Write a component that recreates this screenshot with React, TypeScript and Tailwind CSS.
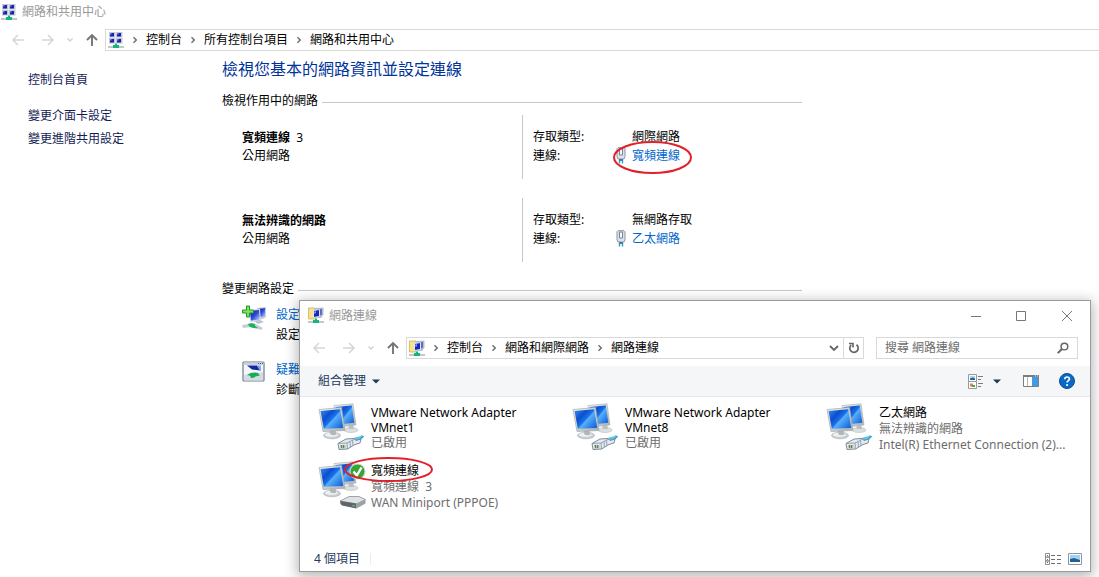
import type { ReactNode } from 'react';

function NetworkCenterIcon() {
  return (
    <svg width="16" height="17" viewBox="0 0 16 17" aria-hidden="true" className="shrink-0">
      {[
        [1, 0],
        [8, 0],
        [1, 6],
        [8, 6],
      ].map(([x, y]) => (
        <g key={`${x}-${y}`}>
          <rect x={x} y={y} width="6.500" height="5.500" fill="#c4c8d0" />
          <rect x={x + 1} y={y + 1} width="4" height="3.500" fill="#1a22b0" />
          <rect x={x + 1} y={y + 1} width="1.500" height="1.500" fill="#6f8cf0" />
        </g>
      ))}
      <path d="M0 14h16v2H0z" fill="#c3c7c9" />
      <path d="M7 11.500h2V13h2v3H5v-3h2z" fill="#12b877" />
    </svg>
  );
}

function ConnectionsIcon() {
  return (
    <svg width="16" height="17" viewBox="0 0 16 17" aria-hidden="true" className="shrink-0">
      <path d="M.5 1H7v11H.5z" fill="#f6e38e" stroke="#cdb04c" strokeWidth=".8" />
      <path d="M7 1 15.500 .5v7L13 11H7z" fill="#b4bccb" />
      <path d="M9.500 2h4.500v5.500l-3 1.500z" fill="#5a70bd" />
      <path d="M5.500 3.500 11.500 2.500v7l-6 1z" fill="#1626c4" stroke="#dfe5f2" strokeWidth="1" />
      <path d="M6.300 4.500 8 4.200v2l-1.700.6z" fill="#86a4ff" />
      <path d="M0 14h16v2H0z" fill="#c3c7c9" />
      <path d="M7 11.500h2V13h2v3H5v-3h2z" fill="#12b877" />
    </svg>
  );
}

function ArrowIcon({ dir, dark }: { dir: 'left' | 'right' | 'up'; dark?: boolean }) {
  const paths = {
    left: 'M13 7H2M7 2L2 7l5 5',
    right: 'M1 7h11M7 2l5 5-5 5',
    up: 'M7 13V2M2 7l5-5 5 5',
  };
  return (
    <svg width="14" height="14" viewBox="0 0 14 14" fill="none" aria-hidden="true">
      <path d={paths[dir]} stroke={dark ? '#757575' : '#d6d6d6'} strokeWidth={dark ? 1.9 : 1.5} />
    </svg>
  );
}

function SmallChevron() {
  return (
    <svg width="8" height="6" viewBox="0 0 8 6" fill="none" aria-hidden="true">
      <path d="M1.500 1.500 4 4l2.500-2.500" stroke="#cfcfcf" strokeWidth="1.300" />
    </svg>
  );
}

function CrumbChevron() {
  return (
    <svg width="6" height="8" viewBox="0 0 6 8" fill="none" aria-hidden="true" className="shrink-0">
      <path d="M1.500 1.200 4.300 4 1.500 6.800" stroke="#6b6b6b" strokeWidth="1.400" />
    </svg>
  );
}

function DownTriangle() {
  return (
    <svg width="8" height="5" viewBox="0 0 8 5" aria-hidden="true">
      <path d="M0 .5h8L4 4.500z" fill="#1e395b" />
    </svg>
  );
}

function PlugIcon() {
  return (
    <svg width="10" height="17" viewBox="0 0 10 17" aria-hidden="true" className="shrink-0">
      <path d="M2 .7h6l1 1v8L8 12H2L1 9.700v-8z" fill="#dbe2ec" stroke="#8b96a5" strokeWidth="1" />
      <path d="M3.500 2v6h3V2z" fill="#f7f9fc" stroke="#76839a" strokeWidth="1" />
      <path d="M3 12h4l-.5 2h-3z" fill="#54728f" />
      <path d="M3.500 13v3.500M6.500 13v3.500" stroke="#299ec0" strokeWidth="1.400" />
    </svg>
  );
}

function NewConnectionIcon() {
  return (
    <svg width="26" height="26" viewBox="0 0 26 26" aria-hidden="true" className="shrink-0">
      <defs>
        <linearGradient id="screen-a" x1="0" y1="0" x2="1" y2="1">
          <stop offset="0" stopColor="#0a1496" />
          <stop offset=".5" stopColor="#2c4bd8" />
          <stop offset="1" stopColor="#d3defa" />
        </linearGradient>
      </defs>
      <path d="M15 3l9-1v10l-3 2-6 1z" fill="#c6ccdb" />
      <path d="M16 4l7-1v8l-7 2z" fill="url(#screen-a)" />
      <path d="M7 5l11-1 1 12-11 1z" fill="#d9deea" />
      <path d="M8 6l9-1 1 9.500-9 1z" fill="url(#screen-a)" />
      <path d="M12 16l6-1 4 2-6 2z" fill="#bcc3cc" />
      <path d="M0 20l12-2 9 5-2 2-9-3-9 1z" fill="#c7ced2" />
      <path d="M6 19c4-2 8 0 7 2l3 2c-4 1-8-1-9-2z" fill="#18b35c" />
      <path
        d="M4.500 1h3v4h4v3h-4v4h-3V8h-4V5h4z"
        fill="#7fe05e"
        stroke="#1c982c"
        strokeWidth="1"
      />
    </svg>
  );
}

function TroubleshootIcon() {
  return (
    <svg width="24" height="22" viewBox="0 0 24 22" aria-hidden="true" className="mt-px shrink-0">
      <rect x="1" y="1" width="21" height="19" rx="1" fill="#f5f7fa" stroke="#717b89" strokeWidth="1.200" />
      <path d="M1.600 1.600h20V4h-20z" fill="#c9d1dd" />
      <path d="M16 2.500h1M18 2.500h1M20 2.500h1" stroke="#4e5b70" strokeWidth="1" />
      <path d="M5 4.500h10l4 5-9-1z" fill="#1428a5" />
      <path d="M15 4.500h4v5l-2-1z" fill="#8aa4ea" />
      <path d="M2 14l19-3v8.500H2z" fill="#d5dbe0" />
      <path d="M5 14c3-3 9-3 11-2l2 3c-4-1-5 2-9 2 0-2-2-3-4-3z" fill="#17ae5b" />
    </svg>
  );
}

function AdapterIcon({ kind }: { kind: 'cable' | 'modem' }) {
  return (
    <svg width="48" height="50" viewBox="0 0 48 50" aria-hidden="true" className="shrink-0">
      <defs>
        <linearGradient id="screen-b" x1="0" y1="0" x2="1" y2=".8">
          <stop offset="0" stopColor="#3b8ff0" />
          <stop offset=".35" stopColor="#0b4fce" />
          <stop offset=".55" stopColor="#1b72ea" />
          <stop offset=".6" stopColor="#57b0fb" />
          <stop offset="1" stopColor="#1a68dc" />
        </linearGradient>
        <linearGradient id="metal" x1="0" y1="0" x2="1" y2="1">
          <stop offset="0" stopColor="#f4f5f6" />
          <stop offset="1" stopColor="#a7aeb2" />
        </linearGradient>
      </defs>
      <ellipse cx="33" cy="29" rx="7" ry="2.500" fill="#dcdfe0" stroke="#b9bdbf" strokeWidth=".6" />
      <path d="M30 23h5l1 5h-5z" fill="#b9bfc2" />
      <path d="M16 4.500 35 2.800 38 24l-18 2z" fill="url(#metal)" stroke="#b0b6b9" strokeWidth=".7" />
      <path d="M17.500 6 33.800 4.500l2.500 17.300L20 23.500z" fill="url(#screen-b)" />
      <ellipse cx="14" cy="34.500" rx="8.500" ry="3.300" fill="#c9ced0" stroke="#a8aeb1" strokeWidth=".6" />
      <ellipse cx="13.500" cy="33.700" rx="6.500" ry="2.100" fill="#eff1f1" />
      <path d="M11 28h6l1.500 5.500q-3 1.500-6 0z" fill="#b1b8bb" />
      <path d="M1 8.500 23.500 6.500 27 29.500 5 30.500z" fill="url(#metal)" stroke="#a3aaae" strokeWidth=".7" />
      <path d="M2.500 10 22.200 8.200 25.200 27 5.800 27.800z" fill="url(#screen-b)" />
      {kind === 'cable' ? (
        <g>
          <path d="M35 39c3-2 7-1 10-4" stroke="#5cc4e8" strokeWidth="3" fill="none" />
          <path d="M37 39.500c4 0 7-2 8.500-4.500" stroke="#1e86b4" strokeWidth="1" fill="none" />
          <path
            d="M20 42.500 28 38l8-.5 2 2 5-1.500-1 4-5 1.500-7.500 4.500-8.500.5z"
            fill="#e4ebf0"
            stroke="#7b8b9c"
            strokeWidth="1"
          />
          <path d="M20 42.500l9-.5.500 6M29 42l8-4M32 40.500l.5 5.500M34.500 39.500l.5 5" fill="none" stroke="#8a99aa" strokeWidth=".9" />
          <path d="M22 44h5.500v3.500H22.500z" fill="#b5bd9c" />
          <path d="M23.500 44v3M25.500 44v3" stroke="#5c6858" strokeWidth=".8" />
        </g>
      ) : (
        <g>
          <circle cx="39.500" cy="12.500" r="7.500" fill="#35a535" stroke="#c7d8c7" strokeWidth="1.200" />
          <path d="M35.500 12.500l3.300 4 4.700-8" fill="none" stroke="#fff" strokeWidth="2.400" />
          <path d="M22 42l9-4.500h10l6.500 3-9 4.500z" fill="#dfe2e3" stroke="#8b9195" strokeWidth=".8" />
          <path d="M22 42l16.500 2.500v5l-14.500-3q-2-1.500-2-4.500z" fill="#5e6468" />
          <path d="M38.500 44.500l9-4v4l-9 5z" fill="#9ba2a5" />
          <path d="M34.500 46.500l2 .3" stroke="#6ce26c" strokeWidth="1.200" />
        </g>
      )}
    </svg>
  );
}

function NavButtons() {
  return (
    <div className="flex shrink-0 items-center">
      <button aria-label="上一頁" className="w-[30px]"><ArrowIcon dir="left" /></button>
      <button aria-label="下一頁" className="w-[25px]"><ArrowIcon dir="right" /></button>
      <button aria-label="最近的位置" className="w-[19px]"><SmallChevron /></button>
      <button aria-label="上移" className="w-5"><ArrowIcon dir="up" dark /></button>
    </div>
  );
}

function Breadcrumbs({ icon, items }: { icon: ReactNode; items: string[] }) {
  return (
    <nav className="flex min-w-0 grow items-center whitespace-nowrap pl-0.5">
      {icon}
      {items.map((item) => (
        <span key={item} className="flex items-center">
          <span className="flex w-[22px] justify-center"><CrumbChevron /></span>
          <a href="#" className="text-black">{item}</a>
        </span>
      ))}
    </nav>
  );
}

function SectionTitle({ children }: { children: ReactNode }) {
  return (
    <div className="flex items-center gap-1">
      <h2 className="leading-4">{children}</h2>
      <div className="mt-0.5 h-px grow bg-[#c8c8c8]" />
    </div>
  );
}

function Circled({ children, className }: { children: ReactNode; className: string }) {
  return (
    <span className="relative">
      {children}
      <svg
        className={`pointer-events-none absolute overflow-visible ${className}`}
        viewBox="0 0 100 40"
        preserveAspectRatio="none"
        aria-hidden="true"
      >
        <ellipse
          cx="50"
          cy="20"
          rx="50"
          ry="20"
          fill="none"
          stroke="#e2202a"
          strokeWidth="2"
          vectorEffect="non-scaling-stroke"
        />
      </svg>
    </span>
  );
}

function NetworkRow({ name, access, link }: { name: ReactNode; access: string; link: ReactNode }) {
  return (
    <section className="flex h-16 pl-5">
      <div className="w-[280px] pt-3.5 leading-[18px]">
        <h3 className="whitespace-pre font-bold">{name}</h3>
        <p>公用網路</p>
      </div>
      <dl className="grid grid-cols-[83px_1fr] content-start border-l border-[#c8c8c8] pl-2.5 pt-3 leading-[19px]">
        <dt>存取類型:</dt>
        <dd className="pl-4">{access}</dd>
        <dt>連線:</dt>
        <dd className="flex items-center gap-1.5">
          <PlugIcon />
          {link}
        </dd>
      </dl>
    </section>
  );
}

function SettingRow({ icon, title, text }: { icon: ReactNode; title: string; text: string }) {
  return (
    <section className="flex pl-5">
      <div className="w-[34px]">{icon}</div>
      <div className="leading-5">
        <a href="#" className="text-[#0066cc]">{title}</a>
        <p>{text}</p>
      </div>
    </section>
  );
}

function Adapter({ kind, name, lines, tight }: { kind: 'cable' | 'modem'; name: ReactNode; lines: string[]; tight?: boolean }) {
  return (
    <li className="flex w-[254px] gap-[5px]">
      <AdapterIcon kind={kind} />
      <div className={`w-[195px] pt-1 text-[#6d6d6d] ${tight ? 'leading-[15px]' : 'leading-4'}`}>
        <p className="w-[160px] text-black">{name}</p>
        {lines.map((line) => (
          <p key={line} className="whitespace-pre">{line}</p>
        ))}
      </div>
    </li>
  );
}

function ConnectionsWindow() {
  return (
    <div className="absolute left-[299px] right-2 top-[300px] border border-[#9b9b9b] bg-white shadow-[0_3px_12px_2px_rgba(0,0,0,0.28)]">
      <header className="flex h-[29px] items-center pl-2 text-[#999]">
        <ConnectionsIcon />
        <h2 className="grow pl-[5px]">網路連線</h2>
        <button aria-label="最小化" className="flex w-[45px] justify-center">
          <svg width="10" height="10" viewBox="0 0 10 10"><path d="M0 5.500h10" stroke="#777" /></svg>
        </button>
        <button aria-label="最大化" className="flex w-[45px] justify-center">
          <svg width="10" height="10" viewBox="0 0 10 10"><path d="M.5.5h9v9h-9z" stroke="#777" fill="none" /></svg>
        </button>
        <button aria-label="關閉" className="flex w-[47px] justify-center">
          <svg width="10" height="10" viewBox="0 0 10 10"><path d="M0 0l10 10M10 0L0 10" stroke="#777" /></svg>
        </button>
      </header>

      <div className="flex h-9 items-center pl-3 pr-3">
        <NavButtons />
        <div className="flex h-[22px] grow items-center border border-[#d9d9d9]">
          <Breadcrumbs icon={<ConnectionsIcon />} items={['控制台', '網路和網際網路', '網路連線']} />
          <button aria-label="先前的位置" className="flex w-[19px] justify-center">
            <svg width="10" height="7" viewBox="0 0 10 7" fill="none"><path d="M1 1l4 4 4-4" stroke="#666" strokeWidth="1.800" /></svg>
          </button>
          <button aria-label="重新整理" className="flex h-full w-5 items-center justify-center border-l border-[#d9d9d9]">
            <svg width="12" height="12" viewBox="0 0 12 12" fill="none">
              <path d="M3.200 3A4.200 4.200 0 1 0 8.500 2.800" stroke="#666" strokeWidth="1.700" />
              <path d="M1 1.500h4v4" stroke="#666" strokeWidth="1.600" />
            </svg>
          </button>
        </div>
        <label className="ml-3 flex h-[22px] w-[202px] items-center border border-[#d9d9d9] pl-2 pr-2">
          <input
            aria-label="搜尋"
            placeholder="搜尋 網路連線"
            className="min-w-0 grow outline-none placeholder:text-[#6d6d6d]"
          />
          <svg width="12" height="12" viewBox="0 0 12 12" fill="none" aria-hidden="true">
            <circle cx="7.500" cy="4.500" r="3.400" stroke="#666" strokeWidth="1.500" />
            <path d="M5 7 .8 11.200" stroke="#666" strokeWidth="2" />
          </svg>
        </label>
      </div>

      <div className="flex h-[31px] items-center border-b border-[#e6e8eb] bg-[#f4f6f8] pl-[18px] pr-[15px] text-[#1e395b]">
        <button className="flex items-center gap-1.5">組合管理 <DownTriangle /></button>
        <div className="grow" />
        <button aria-label="變更檢視" className="flex items-center gap-2.5">
          <svg width="15" height="15" viewBox="0 0 15 15">
            <path d="M.5.5h8v14h-8zM.5 7.500h8" fill="#fff" stroke="#9a9a9a" />
            <path d="M2 2h5v4H2z" fill="#a9d8f8" />
            <path d="M2 4.500l3-1 2 1V6H2z" fill="#2c5f8c" />
            <path d="M2 9.500h3v3H2z" fill="#e3844e" />
            <path d="M4 11h3v2H4z" fill="#45a83e" />
            <path d="M10 2.500h5M10 5.500h3M10 9.500h5M10 12.500h3" stroke="#7c7c7c" />
          </svg>
          <DownTriangle />
        </button>
        <button aria-label="預覽窗格" className="ml-[22px]">
          <svg width="16" height="12" viewBox="0 0 16 12">
            <path d="M.5.5h15v11H.5z" fill="#fff" stroke="#7d7d7d" />
            <path d="M0 0h16v2H0z" fill="#7d7d7d" />
            <path d="M4.500 2v9" stroke="#b4b4b4" />
            <path d="M9 2h6v9H9z" fill="#3f9be5" />
            <path d="M12 1h1M14 1h1" stroke="#d8f0ff" />
          </svg>
        </button>
        <button aria-label="說明" className="ml-5">
          <svg width="16" height="16" viewBox="0 0 16 16">
            <circle cx="8" cy="8" r="7.500" fill="#0869c9" stroke="#114b8b" />
            <path d="M5.800 6.200c0-3 4.600-2.800 4.600-.2 0 1.700-2.300 1.700-2.300 3.600" fill="none" stroke="#fff" strokeWidth="1.700" />
            <circle cx="8.100" cy="12" r="1.100" fill="#fff" />
          </svg>
        </button>
      </div>

      <ul className="flex flex-wrap gap-y-1.5 pb-9 pl-[18px] pt-1">
        <Adapter tight kind="cable" name="VMware Network Adapter VMnet1" lines={['已啟用']} />
        <Adapter tight kind="cable" name="VMware Network Adapter VMnet8" lines={['已啟用']} />
        <Adapter kind="cable" name="乙太網路" lines={['無法辨識的網路', 'Intel(R) Ethernet Connection (2)...']} />
        <Adapter
          kind="modem"
          name={<Circled className="-left-[26px] -top-1 h-[23px] w-[87px]">寬頻連線</Circled>}
          lines={['寬頻連線  3', 'WAN Miniport (PPPOE)']}
        />
      </ul>

      <footer className="flex h-6 items-center pl-3.5 pr-2 text-[#1e395b]">
        <span>4 個項目</span>
        <div className="ml-2.5 h-3 w-px bg-[#ececec]" />
        <div className="grow" />
        <button aria-label="詳細資料" className="mr-[7px]">
          <svg width="16" height="12" viewBox="0 0 16 12">
            <path d="M.5.5h4v3.600h-4zM.5 4.100h4v3.800h-4zM.5 7.900h4v3.600h-4z" fill="#fff" stroke="#8e8e8e" />
            <path d="M2 2.500h1M2 6.500h1" stroke="#4a7cc0" />
            <path d="M2 9.500h1" stroke="#d33" />
            <path d="M6 2.500h4M12 2.500h4M6 6.500h4M12 6.500h4M6 10.500h4M12 10.500h4" stroke="#6f6f6f" />
          </svg>
        </button>
        <button aria-label="大圖示">
          <svg width="14" height="12" viewBox="0 0 14 12">
            <path d="M.5.5h13v11H.5z" fill="#fff" stroke="#8c949c" />
            <path d="M2 2h10v7H2z" fill="#9ed3f8" />
            <path d="M2 6l4-1 6 2v2H2z" fill="#235f94" />
          </svg>
        </button>
      </footer>
    </div>
  );
}

export default function App() {
  return (
    <div className="relative min-h-screen overflow-hidden bg-white font-['Noto_Sans','Noto_Sans_CJK_TC',sans-serif] text-xs text-black [&_button]:shrink-0 [&_svg]:block">
      <header className="flex h-6 items-center gap-[5px] pl-px text-[#999]">
        <NetworkCenterIcon />
        <h1>網路和共用中心</h1>
      </header>
      <div className="flex h-8 items-center pl-[11px]">
        <NavButtons />
        <div className="flex h-[22px] grow items-center border border-r-0 border-[#d9d9d9]">
          <Breadcrumbs icon={<NetworkCenterIcon />} items={['控制台', '所有控制台項目', '網路和共用中心']} />
        </div>
      </div>

      <div className="flex">
        <aside className="flex w-[222px] shrink-0 flex-col pl-7 pt-3 text-[#151c55] leading-[23px]">
          <a href="#" className="mb-[13px]">控制台首頁</a>
          <a href="#">變更介面卡設定</a>
          <a href="#">變更進階共用設定</a>
        </aside>
        <main className="w-[580px]">
          <h1 className="pt-px text-base leading-6 text-[#003399]">檢視您基本的網路資訊並設定連線</h1>
          <div className="pt-3">
            <SectionTitle>檢視作用中的網路</SectionTitle>
          </div>
          <div className="flex flex-col gap-[19px] pt-1.5">
            <NetworkRow
              name={<>寬頻連線{'  '}<span className="font-normal">3</span></>}
              access="網際網路"
              link={
                <Circled className="-left-[18px] -top-1 h-[31px] w-[77px]">
                  <a href="#" className="text-[#0066cc]">寬頻連線</a>
                </Circled>
              }
            />
            <NetworkRow
              name="無法辨識的網路"
              access="無網路存取"
              link={<a href="#" className="text-[#0066cc]">乙太網路</a>}
            />
          </div>
          <div className="pt-[19px]">
            <SectionTitle>變更網路設定</SectionTitle>
          </div>
          <div className="flex flex-col gap-[15px] pt-2">
            <SettingRow icon={<NewConnectionIcon />} title="設定" text="設定" />
            <SettingRow icon={<TroubleshootIcon />} title="疑難" text="診斷" />
          </div>
        </main>
      </div>

      <ConnectionsWindow />
    </div>
  );
}
